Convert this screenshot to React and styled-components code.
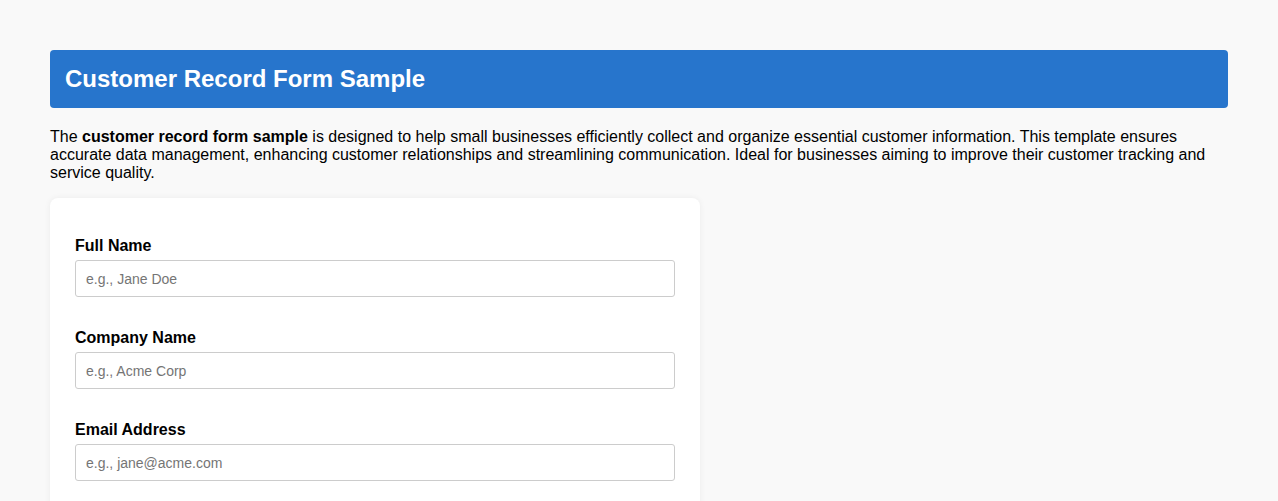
import React, { useState } from 'react';
import styled, { createGlobalStyle } from 'styled-components';

const GlobalStyle = createGlobalStyle`
  body {
    margin: 0;
    background: #f9f9f9;
    font-family: "Liberation Sans", Arial, sans-serif;
    color: #000;
  }
`;

const Page = styled.div`
  padding: 50px;
`;

const Header = styled.h1`
  margin: 0 0 20px;
  padding: 15px;
  background: #2775cc;
  color: #fff;
  font-size: 24px;
  font-weight: bold;
  line-height: 28px;
  border-radius: 4px;
`;

const Intro = styled.p`
  margin: 0 0 16px;
  font-size: 16px;
  line-height: 18px;
`;

const Card = styled.form`
  width: 650px;
  box-sizing: border-box;
  background: #fff;
  border-radius: 8px;
  box-shadow: 0 0 6px rgba(0, 0, 0, 0.06);
  padding: 39px 25px 25px;
`;

const Field = styled.div`
  margin-bottom: 32px;
`;

const Label = styled.label`
  display: block;
  font-size: 16px;
  font-weight: bold;
  line-height: 18px;
  margin-bottom: 5px;
`;

const Input = styled.input`
  display: block;
  width: 100%;
  height: 37px;
  box-sizing: border-box;
  padding: 0 10px;
  border: 1px solid #ccc;
  border-radius: 3px;
  font-family: "Liberation Sans", Arial, sans-serif;
  font-size: 14px;
  color: #000;

  &::placeholder {
    color: #757575;
  }
`;

const fields = [
  { id: 'fullName', label: 'Full Name', placeholder: 'e.g., Jane Doe' },
  { id: 'company', label: 'Company Name', placeholder: 'e.g., Acme Corp' },
  { id: 'email', label: 'Email Address', placeholder: 'e.g., jane@acme.com', type: 'email' },
  { id: 'phone', label: 'Phone Number', placeholder: 'e.g., (555) 123-4567', type: 'tel' },
];

function App() {
  const [values, setValues] = useState({});

  return (
    <Page>
      <GlobalStyle />
      <Header>Customer Record Form Sample</Header>
      <Intro>
        The <strong>customer record form sample</strong> is designed to help small businesses
        efficiently collect and organize essential customer information. This template ensures
        accurate data management, enhancing customer relationships and streamlining communication.
        Ideal for businesses aiming to improve their customer tracking and service quality.
      </Intro>
      <Card onSubmit={(e) => e.preventDefault()}>
        {fields.map((f) => (
          <Field key={f.id}>
            <Label htmlFor={f.id}>{f.label}</Label>
            <Input
              id={f.id}
              type={f.type || 'text'}
              placeholder={f.placeholder}
              value={values[f.id] || ''}
              onChange={(e) => setValues({ ...values, [f.id]: e.target.value })}
            />
          </Field>
        ))}
      </Card>
    </Page>
  );
}

export default App;
